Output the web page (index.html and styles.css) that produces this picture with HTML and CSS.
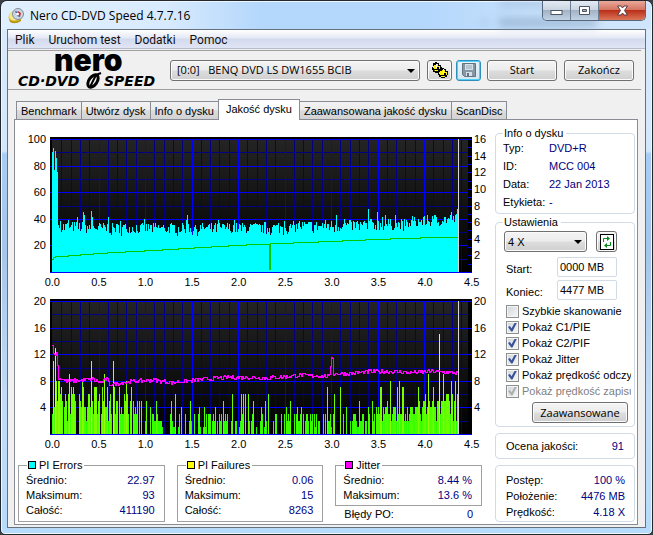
FILE: index.html
```html
<!DOCTYPE html>
<html lang="pl">
<head>
  <meta charset="UTF-8">
  <title>Nero CD-DVD Speed 4.7.7.16</title>
  <link rel="stylesheet" href="styles.css">
</head>
<body>

<div class="window">
  <div class="titlebar">
    <svg class="app-icon" width="16" height="16" viewBox="0 0 16 16">
      <ellipse cx="7" cy="9" rx="6.5" ry="6" fill="#d9b92c"/>
      <ellipse cx="6" cy="8" rx="5" ry="4.5" fill="#f6e68a"/>
      <circle cx="10" cy="6" r="5.5" fill="#c9d6e2" stroke="#7f8fa0"/>
      <path d="M7 3l4 1 1 5-3-1z" fill="#2f5fa8"/>
      <path d="M10 3l3 2-1 4-2-2z" fill="#c8362c"/>
      <circle cx="9.500" cy="6" r="1.500" fill="#fff"/>
      <path d="M1 11q6 5 12 0v2q-6 4-11 1z" fill="#b8930f"/>
    </svg>
    <h1 class="title">Nero CD-DVD Speed 4.7.7.16</h1>
    <div class="smudges"><i></i><i></i><i></i></div>
    <div class="window-buttons">
      <button class="win-btn" aria-label="Minimalizuj">
        <svg width="13" height="11" viewBox="0 0 13 11"><rect x="1" y="5.500" width="11" height="4" fill="#fff" stroke="#4c5563"/></svg>
      </button>
      <button class="win-btn" aria-label="Maksymalizuj">
        <svg width="13" height="11" viewBox="0 0 13 11"><path d="M1.500 1.500h10v8h-10zM4.500 4.500h4v2h-4z" fill="#fff" fill-rule="evenodd" stroke="#4c5563"/></svg>
      </button>
      <button class="win-btn close" aria-label="Zamknij">
        <svg width="13" height="11" viewBox="0 0 13 11"><path d="M1.500 1h3.500l1.500 2 1.500-2h3.500l-3 4.500 3 4.500h-3.500l-1.500-2-1.500 2h-3.500l3-4.500z" fill="#fff" stroke="#5c3a42"/></svg>
      </button>
    </div>
  </div>

  <div class="client">
    <nav class="menu">
      <a href="#">Plik</a>
      <a href="#">Uruchom test</a>
      <a href="#">Dodatki</a>
      <a href="#">Pomoc</a>
    </nav>

    <div class="toolbar">
      <svg class="logo" width="148" height="36" viewBox="0 0 148 36">
        <text class="logo-nero" x="37" y="19">nero</text>
        <text class="logo-sub" x="1" y="34">CD·DVD</text>
        <text class="logo-sub" x="87" y="34">SPEED</text>
        <g fill="none" stroke="#000">
          <ellipse cx="76" cy="29" rx="4" ry="7" stroke-width="3" transform="rotate(35 76 29)"/>
          <path d="M73 35l6-12M79 23l5-2" stroke-width="2"/>
        </g>
      </svg>
      <div class="select drive">
        <select aria-label="Napęd">
          <option>[0:0] &nbsp; BENQ DVD LS DW1655 BCIB</option>
        </select>
      </div>
      <button class="btn icon-btn" aria-label="Opcje">
        <svg width="18" height="18" viewBox="0 0 18 18">
          <g fill="#000">
            <path d="M2 2h2v-1h2v1h2v2h2v2h1v4h-2v2h-5v-1h-2v-2h-1v-3h1z"/>
            <path d="M8 8h2v-1h3v1h2v2h2v4h-1v2h-2v1h-4v-1h-2v-2h-1v-3h1z"/>
          </g>
          <path d="M3 4h2v-1h2v2h2v3h-1v-2h-2v2h-3v-1h-1v-2h1zM3 9h4v1h-3z" fill="#ffee10"/>
          <path d="M9 10h2v-1h3v2h2v3h-1v-2h-2v2h-4v-1h-1v-2h1zM10 15h4v1h-4z" fill="#ffee10"/>
          <path d="M5 3h1v4h-1zM12 8h1v4h-1z" fill="#fff"/>
        </svg>
      </button>
      <button class="btn icon-btn save" aria-label="Zapisz">
        <svg width="14" height="14" viewBox="0 0 14 14">
          <path d="M.5.5h13v13h-11l-2-2z" fill="#8797a3" stroke="#65737e"/>
          <path d="M3 1h8v6h-8zM4 9h6v4h-6z" fill="#d5e1ea"/>
          <path d="M4 3h6M4 5h6" stroke="#9aa9b5"/>
          <path d="M5 10h2v3h-2z" fill="#65737e"/>
        </svg>
      </button>
      <button class="btn start">Start</button>
      <button class="btn quit">Zakończ</button>
    </div>

    <div class="tabs" role="tablist">
      <button class="tab" role="tab">Benchmark</button>
      <button class="tab" role="tab">Utwórz dysk</button>
      <button class="tab" role="tab">Info o dysku</button>
      <button class="tab active" role="tab" aria-selected="true">Jakość dysku</button>
      <button class="tab" role="tab">Zaawansowana jakość dysku</button>
      <button class="tab" role="tab">ScanDisc</button>
    </div>

    <div class="page">
      <div class="results">
        <div class="chart">
          <div class="scale left five"><span>100</span><span>80</span><span>60</span><span>40</span><span>20</span></div>
          <svg class="plot" id="pie" viewBox="0 0 422 136" preserveAspectRatio="none"></svg>
          <div class="scale right eight"><span>16</span><span>14</span><span>12</span><span>10</span><span>8</span><span>6</span><span>4</span><span>2</span></div>
          <div class="positions"><span>0.0</span><span>0.5</span><span>1.0</span><span>1.5</span><span>2.0</span><span>2.5</span><span>3.0</span><span>3.5</span><span>4.0</span><span>4.5</span></div>
        </div>
        <div class="chart">
          <div class="scale left five"><span>20</span><span>16</span><span>12</span><span>8</span><span>4</span></div>
          <svg class="plot" id="pif" viewBox="0 0 422 136" preserveAspectRatio="none"></svg>
          <div class="scale right five"><span>20</span><span>16</span><span>12</span><span>8</span><span>4</span></div>
          <div class="positions"><span>0.0</span><span>0.5</span><span>1.0</span><span>1.5</span><span>2.0</span><span>2.5</span><span>3.0</span><span>3.5</span><span>4.0</span><span>4.5</span></div>
        </div>

        <div class="stats">
          <fieldset class="stat">
            <legend><i class="swatch cyan"></i>PI Errors</legend>
            <dl>
              <dt>Średnio:</dt><dd>22.97</dd>
              <dt>Maksimum:</dt><dd>93</dd>
              <dt>Całość:</dt><dd>411190</dd>
            </dl>
          </fieldset>
          <fieldset class="stat">
            <legend><i class="swatch yellow"></i>PI Failures</legend>
            <dl>
              <dt>Średnio:</dt><dd>0.06</dd>
              <dt>Maksimum:</dt><dd>15</dd>
              <dt>Całość:</dt><dd>8263</dd>
            </dl>
          </fieldset>
          <div>
            <fieldset class="stat">
              <legend><i class="swatch magenta"></i>Jitter</legend>
              <dl>
                <dt>Średnio:</dt><dd>8.44 %</dd>
                <dt>Maksimum:</dt><dd>13.6 %</dd>
              </dl>
            </fieldset>
            <dl class="po">
              <dt>Błędy PO:</dt><dd>0</dd>
            </dl>
          </div>
        </div>
      </div>

      <aside class="sidebar">
        <fieldset class="group">
          <legend>Info o dysku</legend>
          <dl class="info">
            <dt>Typ:</dt><dd>DVD+R</dd>
            <dt>ID:</dt><dd>MCC 004</dd>
            <dt>Data:</dt><dd>22 Jan 2013</dd>
            <dt>Etykieta:</dt><dd>-</dd>
          </dl>
        </fieldset>

        <fieldset class="group settings">
          <legend>Ustawienia</legend>
          <div class="speed">
            <div class="select">
              <select aria-label="Prędkość"><option>4 X</option></select>
            </div>
            <button class="btn refresh" aria-label="Odśwież">
              <svg width="14" height="16" viewBox="0 0 14 16">
                <rect x=".5" y=".5" width="13" height="15" fill="#fff" stroke="#000"/>
                <path d="M3.500 8v-3.500h4M10.500 8v3.500h-4" fill="none" stroke="#0a8a1a"/>
                <path d="M7 2l3 2.500-3 2.500zM7 9l-3 2.500 3 2.500z" fill="#0a8a1a"/>
              </svg>
            </button>
          </div>
          <div class="field"><label for="from">Start:</label><input id="from" type="text" value="0000 MB"></div>
          <div class="field"><label for="to">Koniec:</label><input id="to" type="text" value="4477 MB"></div>
          <div class="checks">
            <label><input type="checkbox">Szybkie skanowanie</label>
            <label><input type="checkbox" checked>Pokaż C1/PIE</label>
            <label><input type="checkbox" checked>Pokaż C2/PIF</label>
            <label><input type="checkbox" checked>Pokaż Jitter</label>
            <label><input type="checkbox" checked>Pokaż prędkość odczytu</label>
            <label class="off"><input type="checkbox" checked disabled>Pokaż prędkość zapisu</label>
          </div>
          <button class="btn advanced">Zaawansowane</button>
        </fieldset>

        <dl class="group score">
          <dt>Ocena jakości:</dt><dd>91</dd>
        </dl>

        <dl class="group progress">
          <dt>Postęp:</dt><dd>100 %</dd>
          <dt>Położenie:</dt><dd>4476 MB</dd>
          <dt>Prędkość:</dt><dd>4.18 X</dd>
        </dl>
      </aside>
    </div>
  </div>
</div>

<script src="charts.js"></script>
</body>
</html>
```

FILE: styles.css
```css
* {
  box-sizing: border-box;
}

body {
  margin: 0;
  background: #3b3f46;
  font-family: "Liberation Sans", Arial, sans-serif;
  font-size: 11px;
  line-height: 14px;
  color: #000;
}

button, select, input {
  font: inherit;
  color: inherit;
}

dl, dd {
  margin: 0;
}

.window {
  display: flex;
  flex-direction: column;
  min-height: 100vh;
  padding: 0 6px 6px;
  border: 1px solid #23272e;
  border-radius: 7px 7px 5px 5px;
  background: linear-gradient(#c3dffb, #d8eafc 28px, #d3e7fb 150px, #a8cdf5 153px, #a5c6ec 250px, #c2dcf8 400px, #b7dbfb);
  box-shadow: inset 0 0 0 1px #eef7ff;
}

/* title bar */
.titlebar {
  position: relative;
  display: flex;
  align-items: center;
  height: 28px;
  margin: 0 -5px;
  padding-left: 6px;
  background: linear-gradient(90deg, #e0effd, #d8ebfe 25%, #b4d7fc 40%, #b4d7fc 65%, #cfe5fb 90%);
  border-top: 1px solid #eef7ff;
  border-radius: 6px 6px 0 0;
}

.title {
  flex: 1;
  margin: 0 0 0 6px;
  font: 12px "Open Sans", sans-serif;
}

.smudges i {
  position: absolute;
  right: 54px;
  top: 16px;
  width: 98px;
  height: 9px;
  background: #7795b5;
  opacity: 0.5;
  filter: blur(4px);
}

.smudges i:nth-child(2) {
  top: 0;
  right: 90px;
  width: 62px;
  height: 4px;
}

.smudges i:nth-child(3) {
  right: 164px;
  top: 18px;
  width: 5px;
  height: 5px;
}

.window-buttons {
  position: relative;
  display: flex;
  align-self: flex-start;
  margin: -1px 5px 0 0;
  border: 1px solid #56677d;
  border-top: 0;
  border-radius: 0 0 5px 5px;
  overflow: hidden;
}

.win-btn {
  display: flex;
  align-items: center;
  justify-content: center;
  width: 28px;
  height: 19px;
  padding: 0;
  border: 0;
  border-right: 1px solid #6d7e93;
  background: linear-gradient(#e3ebf4, #c8d3e0 50%, #a3b2c5 50%, #c2d2e5);
}

.win-btn.close {
  width: 46px;
  border-right: 0;
  background: linear-gradient(#e9a99b, #d3705c 50%, #b9301a 50%, #dc7559);
}

/* menu */
.client {
  flex: 1;
  display: flex;
  flex-direction: column;
  border: 1px solid #65717f;
  background: #f0f0f0;
}

.menu {
  display: flex;
  gap: 14px;
  height: 19px;
  padding-left: 7px;
  background: linear-gradient(#fff, #e4e8f4 45%, #d3daee 50%, #dfe5f5);
  border-bottom: 1px solid #b6bccc;
  font: 12px/20px Roboto, sans-serif;
}

.menu a {
  color: #111;
  text-decoration: none;
}

/* toolbar */
.toolbar {
  display: flex;
  align-items: center;
  gap: 7px;
  height: 40px;
  margin: 1px 4px 0 0;
  border-top: 1px solid #a0a0a0;
  border-bottom: 1px solid #a0a0a0;
  font-family: "Open Sans", sans-serif;
}

.logo {
  flex: none;
  margin-left: 9px;
  margin-right: -2px;
  overflow: visible;
}

.logo-nero {
  font: 900 30px Inter, sans-serif;
}

.logo-sub {
  font: italic bold 14px "DejaVu Sans", sans-serif;
}

.btn {
  height: 21px;
  padding: 0;
  border: 1px solid #707070;
  border-radius: 3px;
  background: linear-gradient(#f4f4f4, #ececec 48%, #dddddd 52%, #cfcfcf);
  box-shadow: inset 0 0 0 1px #fbfbfb;
  font-family: "Open Sans", sans-serif;
}

.select {
  position: relative;
}

.select::after {
  content: "";
  position: absolute;
  right: 5px;
  top: 9px;
  border: 4px solid transparent;
  border-top-color: #000;
  border-bottom: 0;
  pointer-events: none;
}

.select select {
  appearance: none;
  display: block;
  width: 100%;
  height: 21px;
  padding: 0 16px 0 6px;
  border: 1px solid #707070;
  border-radius: 3px;
  background: linear-gradient(#f4f4f4, #ececec 48%, #dddddd 52%, #cfcfcf);
  box-shadow: inset 0 0 0 1px #fbfbfb;
}

.drive {
  flex: 1;
}

.icon-btn {
  display: flex;
  align-items: center;
  justify-content: center;
  width: 25px;
}

.icon-btn.save {
  margin-left: -3px;
  border-color: #2c8fbd;
  background: linear-gradient(#eaf4fa, #d3e6f1);
  box-shadow: inset 0 0 0 1px #4fd0f8;
}

.start, .quit {
  width: 70px;
}

.icon-btn + .start {
  margin-left: -1px;
}

.quit {
  margin-right: 7px;
}

/* tabs */
.tabs {
  display: flex;
  align-items: flex-end;
  height: 29px;
  padding-left: 8px;
}

.tab {
  height: 18px;
  padding: 0 4px;
  border: 1px solid #898c95;
  border-bottom: 0;
  background: linear-gradient(#f3f3f3, #ebebeb 50%, #dddddd 50%, #d2d2d2);
  white-space: nowrap;
}

.tab + .tab {
  margin-left: -1px;
}

.tab.active {
  position: relative;
  height: 21px;
  margin-bottom: -1px;
  padding: 0 7px 2px;
  background: #fff;
}

.page {
  flex: 1;
  display: grid;
  grid-template-columns: 1fr 140px;
  gap: 3px;
  margin: 0 7px 2px 6px;
  padding: 6px 2px 2px 3px;
  border: 1px solid #898c95;
  background: #fff;
}

/* charts */
.results {
  min-width: 0;
  padding-top: 11px;
}

.chart {
  display: grid;
  grid-template-columns: 32px 1fr 20px;
  grid-template-rows: 136px 18px;
  margin-bottom: 8px;
}

.plot {
  display: block;
  width: 100%;
  height: 136px;
  shape-rendering: crispEdges;
}

.scale {
  display: grid;
  margin: -5px 0 8px;
  grid-auto-rows: 1fr;
}

.scale.left {
  padding-right: 4px;
  text-align: right;
}

.scale.right {
  padding-left: 2px;
}

.scale span {
  height: 14px;
}

.five {
  grid-template-rows: repeat(5, 1fr);
}

.eight {
  grid-template-rows: repeat(8, 1fr);
}

.positions {
  grid-column: 1 / -1;
  display: grid;
  grid-template-columns: repeat(10, 1fr);
  margin: 2px -3px 0 11px;
  text-align: center;
}

/* statistics */
.stats {
  display: grid;
  grid-template-columns: repeat(3, 1fr);
  gap: 12px;
  margin: -3px 10px 0 0;
}

.stat {
  margin: 0;
  padding: 1px 9px 2px 7px;
  min-width: 0;
  border: 1px solid #a0a0a0;
}

.stat legend {
  display: flex;
  align-items: center;
  gap: 3px;
  margin-left: 1px;
  padding: 0 2px 0 1px;
}

.stats dl {
  display: grid;
  grid-template-columns: auto 1fr;
  line-height: 15px;
}

.stats dd, .score dd, .progress dd {
  text-align: right;
}

dd {
  color: #000080;
}

.stats .po {
  padding: 1px 9px 0;
}

.swatch {
  width: 8px;
  height: 8px;
  border: 1px solid #000;
}

.cyan {
  background: #00ffff;
}

.yellow {
  background: #ffff00;
}

.magenta {
  background: #ff00ff;
}

/* sidebar */
.group {
  min-width: 0;
  margin: 0;
  padding: 0 3px 0 7px;
  border: 1px solid #d0dbe6;
  border-radius: 4px;
}

.group legend {
  padding: 0 3px 0 1px;
}

.info {
  display: grid;
  grid-template-columns: 46px 1fr;
  margin-top: -1px;
  line-height: 18px;
  padding-bottom: 2px;
}

.settings {
  margin-top: 1px;
  padding-bottom: 3px;
}

.speed {
  display: flex;
  gap: 9px;
  margin: 2px 14px 5px 1px;
}

.speed .select {
  flex: 1;
}

.speed select {
  padding-left: 3px;
}

.refresh {
  display: flex;
  align-items: center;
  justify-content: center;
  width: 21px;
}

.field {
  display: flex;
  justify-content: space-between;
  align-items: center;
  margin: 0 14px 3px 3px;
}

.field label {
  padding-top: 4px;
}

.field input {
  width: 60px;
  height: 20px;
  padding: 0 2px;
  border: 1px solid #d0dbe6;
  border-radius: 2px;
}

.checks {
  display: grid;
  grid-auto-rows: 16px;
  overflow: hidden;
}

.checks label {
  display: flex;
  align-items: center;
  gap: 3px;
  margin-left: 3px;
  white-space: nowrap;
}

.checks .off {
  color: #808080;
}

.checks input {
  appearance: none;
  flex: none;
  width: 13px;
  height: 13px;
  margin: 0;
  border: 1px solid #8e8f8f;
  background: linear-gradient(135deg, #d0d4da, #f8f8f8);
  box-shadow: inset 0 0 0 1px #f4f4f4;
}

.checks input:checked::before {
  content: "";
  display: block;
  width: 9px;
  height: 9px;
  margin: 1px;
  background: #3c549c;
  clip-path: polygon(0 50%, 20% 40%, 40% 65%, 75% 0, 100% 0, 50% 100%, 35% 100%);
}

.checks input:disabled::before {
  background: #b0b0b0;
}

.advanced {
  display: block;
  width: 96px;
  margin: 3px 3px 0 auto;
}

.score, .progress {
  display: grid;
  grid-template-columns: auto 1fr;
  padding: 5px 10px;
}

.score {
  margin-top: 6px;
}

.progress {
  margin-top: 6px;
  padding: 6px 9px 1px 10px;
  line-height: 16px;
}
```

FILE: charts.js
```js
const WIDTH = 406;   // scanned part of the disc, 1 px per sample
const LEFT = 2;
const BOTTOM = 135;
const TOP = 2;

let seed = 7;
function rnd() {
  seed = (seed * 16807) % 2147483647;
  return seed / 2147483647;
}

function y(value, max) {
  return Math.round(BOTTOM - (BOTTOM - TOP) * value / max);
}

// value between the given [x, value] points
function between(points, x) {
  for (let i = 1; i < points.length; i++) {
    if (x <= points[i][0]) {
      const [x0, v0] = points[i - 1];
      const [x1, v1] = points[i];
      return v0 + (v1 - v0) * (x - x0) / (x1 - x0);
    }
  }
  return points[points.length - 1][1];
}

function background(id) {
  let out = `<defs><linearGradient id="bg-${id}" x2="0" y2="1"><stop stop-color="#242424"/><stop offset="1" stop-color="#000"/></linearGradient></defs>
    <rect width="422" height="136" fill="#000"/>
    <rect x="2" y="2" width="416" height="134" fill="url(#bg-${id})"/>`;
  for (let i = 1; i < 45; i++) {
    if (i % 5) out += `<rect x="${Math.round(LEFT + i * 9.3)}" y="2" width="1" height="133" fill="#000080"/>`;
  }
  for (let i = 1; i < 10; i += 2) {
    out += `<rect x="2" y="${y(i, 10)}" width="416" height="1" fill="#000080"/>`;
  }
  for (let i = 0; i <= 10; i += 2) {
    out += `<rect x="0" y="${y(i, 10)}" width="418" height="1" fill="#0000ff"/>`;
  }
  for (let i = 5; i < 45; i += 5) {
    out += `<rect x="${Math.round(LEFT + i * 9.3)}" y="2" width="1" height="133" fill="#0000ff"/>`;
  }
  return out;
}

const endMark = '<rect x="408" y="2" width="1" height="133" fill="#d8d8d8"/>';

// stepped line, one pixel thick
function line(values, max, color) {
  let out = '';
  let last = y(values[0], max);
  values.forEach((v, x) => {
    const now = y(v, max);
    out += `<rect x="${LEFT + x}" y="${Math.min(last, now)}" width="1" height="${Math.abs(now - last) + 1}" fill="${color}"/>`;
    last = now;
  });
  return out;
}

function ticks(count) {
  let out = '';
  for (let i = 0; i <= count; i++) {
    out += `<rect x="418" y="${y(i, count)}" width="4" height="1" fill="#0000ff"/>`;
  }
  return out;
}

// PI errors and read speed
const piePeaks = {0: 90, 1: 93, 2: 77, 3: 91, 4: 86, 5: 75, 6: 35, 7: 33, 8: 38, 16: 39, 25: 41, 31: 45, 32: 43, 39: 46, 40: 41, 56: 41, 68: 38, 92: 40, 135: 43, 134: 39, 166: 39, 182: 39, 232: 38, 247: 38, 284: 43, 292: 40, 316: 47, 319: 40, 325: 45, 330: 41, 333: 43, 343: 43, 360: 42, 375: 43, 380: 42, 399: 45, 403: 43, 405: 47};
const pieBase = [[0, 30], [60, 29], [120, 29], [200, 29], [280, 31], [350, 32], [380, 35], [406, 36]];
let pie = '';
for (let x = 0; x < WIDTH; x++) {
  const v = piePeaks[x] || between(pieBase, x) + Math.floor(rnd() * 9) - (rnd() < 0.1 ? 2 : 0);
  pie += `<rect x="${LEFT + x}" y="${y(v, 100)}" width="1" height="${BOTTOM - y(v, 100)}"/>`;
}

const speedPoints = [[0, 11.5], [50, 14.5], [100, 16.5], [148, 18.7], [188, 20.5], [234, 22], [278, 23.3], [330, 25], [370, 26], [406, 26.7]];
const speed = [];
for (let x = 0; x < WIDTH; x++) {
  speed.push(between(speedPoints, x));
}
speed[0] = 10;
speed[217] = 2;

document.getElementById('pie').innerHTML =
  background('pie') + ticks(16) +
  `<g fill="#00ffff">${pie}</g>` + line(speed, 100, '#00c800') + endMark;

// PI failures and jitter
const pifPeaks = {0: 3, 1: 11, 2: 4, 3: 13, 4: 8, 5: 5, 6: 8, 7: 8, 8: 6, 9: 7, 17: 9, 19: 7, 21: 7, 30: 8, 31: 7, 36: 6, 39: 11, 42: 7, 43: 7, 44: 7, 50: 7, 52: 9, 55: 7, 58: 6, 61: 11, 62: 7, 67: 7, 74: 8, 75: 6, 79: 7, 81: 5, 87: 5, 89: 5, 94: 5, 98: 4, 100: 3, 104: 5, 105: 3, 119: 5, 123: 6, 129: 4, 133: 3, 138: 5, 142: 3, 147: 4, 152: 4, 158: 3, 163: 4, 171: 5, 173: 3, 180: 6, 189: 6, 191: 6, 193: 6, 196: 6, 201: 5, 209: 4, 213: 5, 216: 6, 221: 2, 224: 3, 229: 3, 234: 4, 238: 5, 245: 4, 249: 4, 251: 3, 255: 3, 260: 3, 264: 3, 267: 2, 271: 3, 275: 7, 279: 1, 282: 6, 288: 7, 294: 4, 298: 2, 302: 3, 307: 5, 311: 3, 316: 4, 320: 5, 325: 3, 328: 7, 329: 7, 335: 5, 338: 8, 342: 4, 345: 7, 347: 8, 350: 7, 351: 7, 355: 4, 359: 4, 363: 4, 366: 7, 370: 4, 373: 6, 376: 9, 381: 7, 385: 5, 387: 15, 391: 9, 395: 6, 399: 8, 403: 8, 405: 6};
const pifBase = [[0, 6], [84, 6], [90, 3], [260, 3], [300, 3], [330, 4], [370, 5], [406, 6]];
const pifFill = [[0, 0.85], [80, 0.8], [88, 0.5], [290, 0.45], [308, 0.75], [325, 1], [406, 1]];
let pif = '';
for (let x = 0; x < WIDTH; x++) {
  let v = pifPeaks[x];
  if (!v) {
    if (rnd() > between(pifFill, x)) continue;
    v = Math.max(1, Math.round(between(pifBase, x) * (0.4 + rnd() * 0.7)));
  }
  const top = y(v, 20);
  pif += `<rect x="${LEFT + x}" y="${top}" width="1" height="${BOTTOM - top}" fill="rgb(${v * 16 + 10},255,0)"/>`;
}

const jitterPoints = [[0, 13.6], [1, 12], [4, 12.2], [6, 8.5], [15, 8], [40, 8.3], [48, 7.8], [54, 8.4], [57, 7.5], [75, 7.9], [100, 8.2], [120, 7.8], [150, 8.3], [180, 8.6], [215, 8.5], [250, 8.9], [277, 8.7], [279, 11.8], [280, 11.4], [281, 9.1], [300, 9.2], [320, 9.5], [360, 9.3], [380, 9.5], [406, 9.2]];
const jitter = [];
for (let x = 0; x < WIDTH; x++) {
  jitter.push(between(jitterPoints, x) + (rnd() - 0.5) * 0.6);
}

document.getElementById('pif').innerHTML =
  background('pif') + ticks(5) + pif + line(jitter, 20, '#ff00ff') + endMark;
```
